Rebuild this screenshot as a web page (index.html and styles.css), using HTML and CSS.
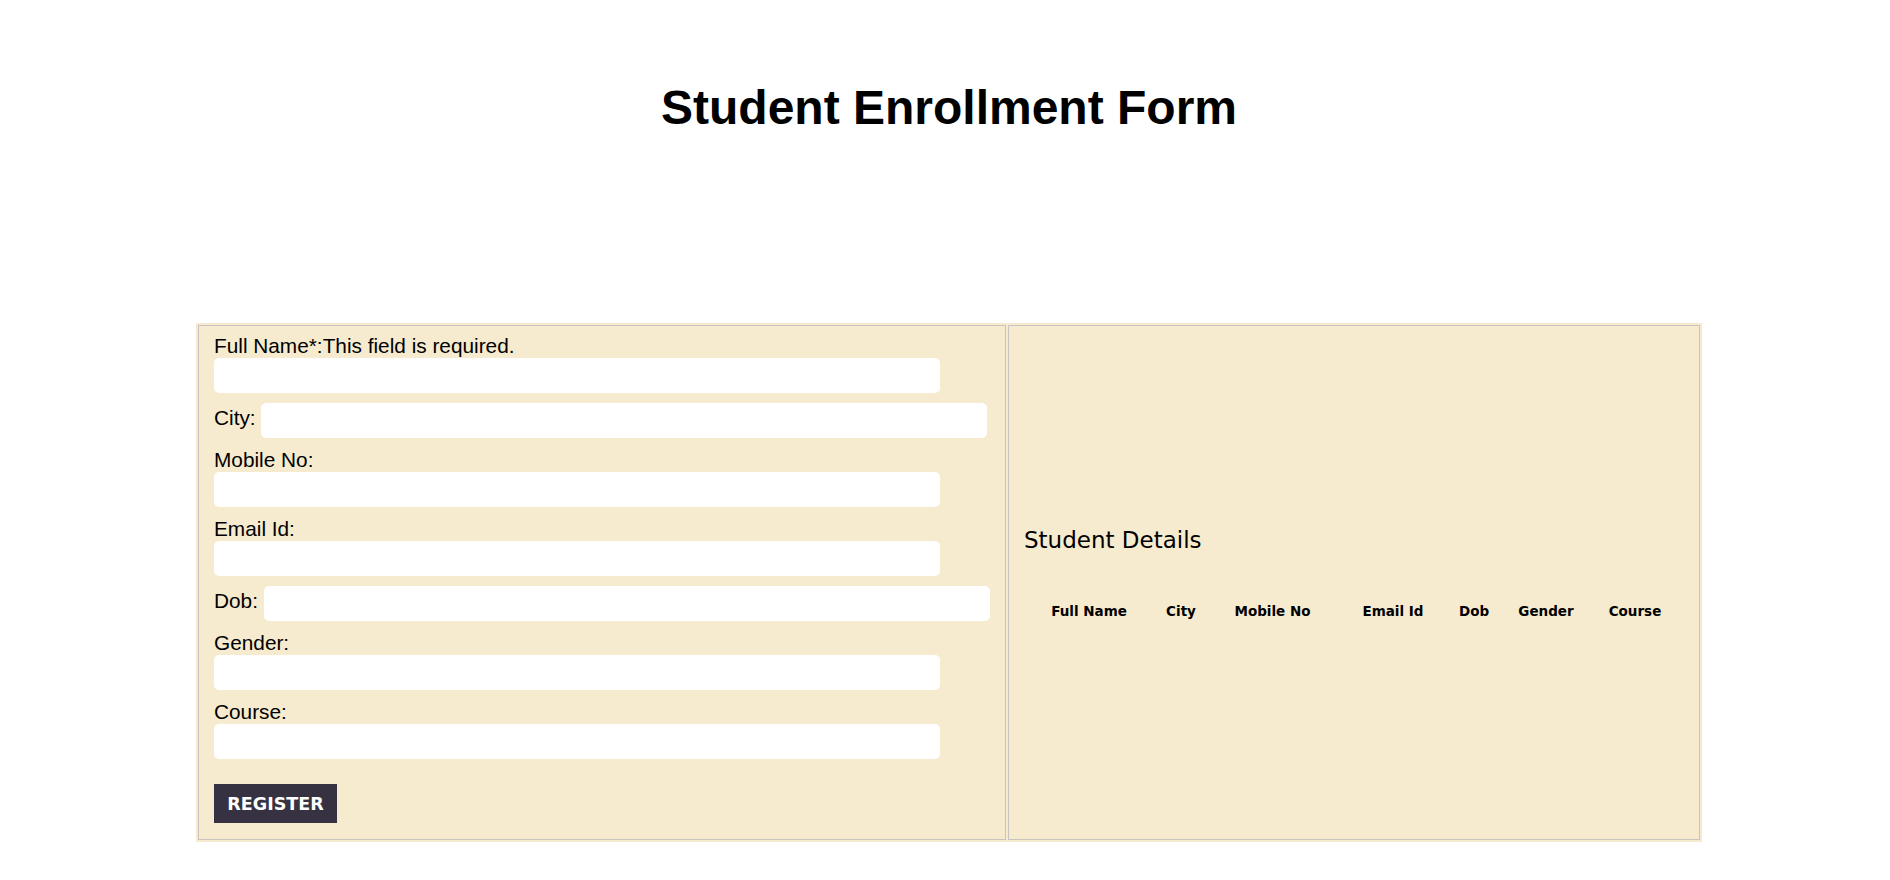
FILE: index.html
```html
<!DOCTYPE html>
<html lang="en">
<head>
<meta charset="utf-8">
<title>Student Enrollment Form</title>
<link rel="stylesheet" href="styles.css">
</head>
<body>
<div class="page">
  <h1 class="title">Student Enrollment Form</h1>
  <div class="panel">
    <div class="cell form-cell">
      <form class="form">
        <div class="field stacked">
          <label>Full Name*:This field is required.</label>
          <input type="text">
        </div>
        <div class="field inline">
          <label>City:</label> <input type="text">
        </div>
        <div class="field stacked">
          <label>Mobile No:</label>
          <input type="text">
        </div>
        <div class="field stacked">
          <label>Email Id:</label>
          <input type="text">
        </div>
        <div class="field inline">
          <label>Dob:</label> <input type="text">
        </div>
        <div class="field stacked">
          <label>Gender:</label>
          <input type="text">
        </div>
        <div class="field stacked">
          <label>Course:</label>
          <input type="text">
        </div>
        <button type="button" class="register">REGISTER</button>
      </form>
    </div>
    <div class="cell details-cell">
      <h2 class="details-title">Student Details</h2>
      <table class="details-table">
        <thead>
          <tr>
            <th class="c-name">Full Name</th>
            <th class="c-city">City</th>
            <th class="c-mobile">Mobile No</th>
            <th class="c-email">Email Id</th>
            <th class="c-dob">Dob</th>
            <th class="c-gender">Gender</th>
            <th class="c-course">Course</th>
          </tr>
        </thead>
        <tbody></tbody>
      </table>
    </div>
  </div>
</div>
</body>
</html>
```
FILE: styles.css
```css
html, body {
  margin: 0;
  padding: 0;
  background: #ffffff;
}

body {
  font-family: "Liberation Sans", Arial, sans-serif;
  color: #000;
}

.page {
  width: 1506px;
  margin-left: 196px;
}

.title {
  margin: 80px 0 0;
  height: 243px;
  font-family: "Liberation Sans", Arial, sans-serif;
  font-size: 48px;
  font-weight: bold;
  line-height: 55px;
  text-align: center;
}

.panel {
  display: flex;
  align-items: stretch;
  gap: 2px;
  padding: 2px;
  background: #f6ebcf;
}

.cell {
  border: 1px solid #c9c4c0;
  box-sizing: border-box;
}

.form-cell {
  width: 808px;
  padding: 8px 15px 16px 15px;
}

.form {
  margin: 0;
}

.field {
  margin-bottom: 10px;
  font-size: 20.8px;
}

.field label {
  font-family: "Liberation Sans", Arial, sans-serif;
}

.field.stacked label {
  display: block;
  line-height: 24px;
  height: 24px;
}

.field.inline {
  height: 35px;
  line-height: 20px;
}

.field input {
  box-sizing: border-box;
  width: 726px;
  height: 35px;
  border: none;
  border-radius: 5px;
  background: #ffffff;
  padding: 0 8px;
  margin: 0;
  font-family: "Liberation Sans", Arial, sans-serif;
  font-size: 13.333px;
  outline: none;
}

.field.stacked input {
  display: block;
}

.field.inline input {
  display: inline-block;
  vertical-align: baseline;
}

.register {
  display: block;
  margin-top: 25px;
  width: 123px;
  height: 39px;
  padding: 0;
  border: none;
  border-radius: 0;
  background: #363242;
  color: #ffffff;
  font-family: "Comic Sans MS", "DejaVu Sans", sans-serif;
  font-weight: bold;
  font-size: 17.5px;
  letter-spacing: 0;
}

.details-cell {
  width: 692px;
  padding: 0 15px;
  display: flex;
  flex-direction: column;
  justify-content: center;
}

.details-title {
  margin: 0 0 48px;
  font-family: "Comic Sans MS", "DejaVu Sans", sans-serif;
  font-weight: normal;
  font-size: 23px;
  line-height: 28px;
}

.details-table {
  table-layout: fixed;
  border-collapse: separate;
  border-spacing: 2px 0;
  width: 653px;
  margin-bottom: 19px;
}

.details-table th {
  padding: 0;
  font-family: "Comic Sans MS", "DejaVu Sans", sans-serif;
  font-weight: bold;
  font-size: 13.5px;
  line-height: 18px;
  text-align: center;
  white-space: nowrap;
}

.c-name { width: 126px; }
.c-city { width: 54px; }
.c-mobile { width: 125px; }
.c-email { width: 112px; }
.c-dob { width: 46px; }
.c-gender { width: 94px; }
.c-course { width: 80px; }
```
